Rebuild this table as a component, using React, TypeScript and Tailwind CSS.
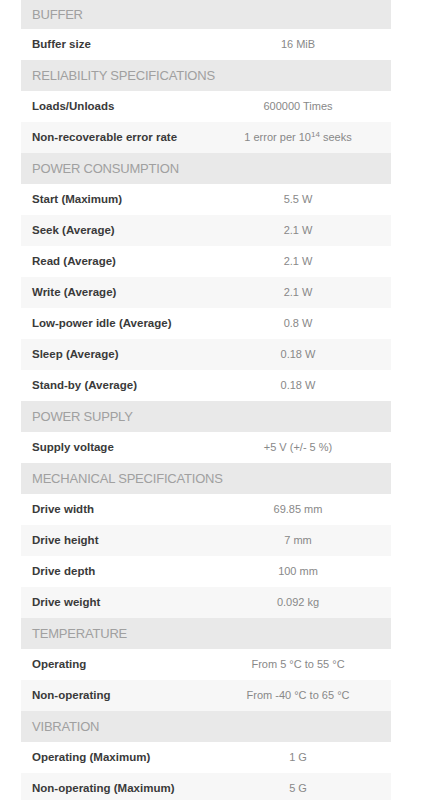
import React from "react";

type Row = { label: string; value: React.ReactNode };
type Section = { title: string; rows: Row[] };

const sections: Section[] = [
  { title: "BUFFER", rows: [{ label: "Buffer size", value: "16 MiB" }] },
  {
    title: "RELIABILITY SPECIFICATIONS",
    rows: [
      { label: "Loads/Unloads", value: "600000 Times" },
      {
        label: "Non-recoverable error rate",
        value: (
          <span>
            1 error per 10<sup className="text-[8px]">14</sup> seeks
          </span>
        ),
      },
    ],
  },
  {
    title: "POWER CONSUMPTION",
    rows: [
      { label: "Start (Maximum)", value: "5.5 W" },
      { label: "Seek (Average)", value: "2.1 W" },
      { label: "Read (Average)", value: "2.1 W" },
      { label: "Write (Average)", value: "2.1 W" },
      { label: "Low-power idle (Average)", value: "0.8 W" },
      { label: "Sleep (Average)", value: "0.18 W" },
      { label: "Stand-by (Average)", value: "0.18 W" },
    ],
  },
  { title: "POWER SUPPLY", rows: [{ label: "Supply voltage", value: "+5 V (+/- 5 %)" }] },
  {
    title: "MECHANICAL SPECIFICATIONS",
    rows: [
      { label: "Drive width", value: "69.85 mm" },
      { label: "Drive height", value: "7 mm" },
      { label: "Drive depth", value: "100 mm" },
      { label: "Drive weight", value: "0.092 kg" },
    ],
  },
  {
    title: "TEMPERATURE",
    rows: [
      { label: "Operating", value: "From 5 °C to 55 °C" },
      { label: "Non-operating", value: "From -40 °C to 65 °C" },
    ],
  },
  {
    title: "VIBRATION",
    rows: [
      { label: "Operating (Maximum)", value: "1 G" },
      { label: "Non-operating (Maximum)", value: "5 G" },
    ],
  },
];

export default function App() {
  return (
    <div
      className="w-[426px] bg-white pl-[21px] pr-[35px]"
      style={{ fontFamily: '"Liberation Sans", Arial, sans-serif' }}
    >
      {sections.map((s, si) => (
        <div key={s.title}>
          <div
            className={`${si === 0 ? "h-[29px]" : "h-[31px]"} bg-[#e9e9e9] flex items-center pl-[11px] text-[13px] text-[#a0a0a0] tracking-[-0.2px]`}
          >
            {s.title}
          </div>
          {s.rows.map((r, ri) => (
            <div
              key={r.label}
              className={`h-[31px] flex items-center ${ri % 2 === 1 ? "bg-[#f7f7f7]" : "bg-white"}`}
            >
              <div className="w-[184px] pl-[11px] text-[11.5px] font-bold text-[#3a3a3a]">
                {r.label}
              </div>
              <div className="flex-1 text-center text-[11px] text-[#888888]">{r.value}</div>
            </div>
          ))}
        </div>
      ))}
    </div>
  );
}
